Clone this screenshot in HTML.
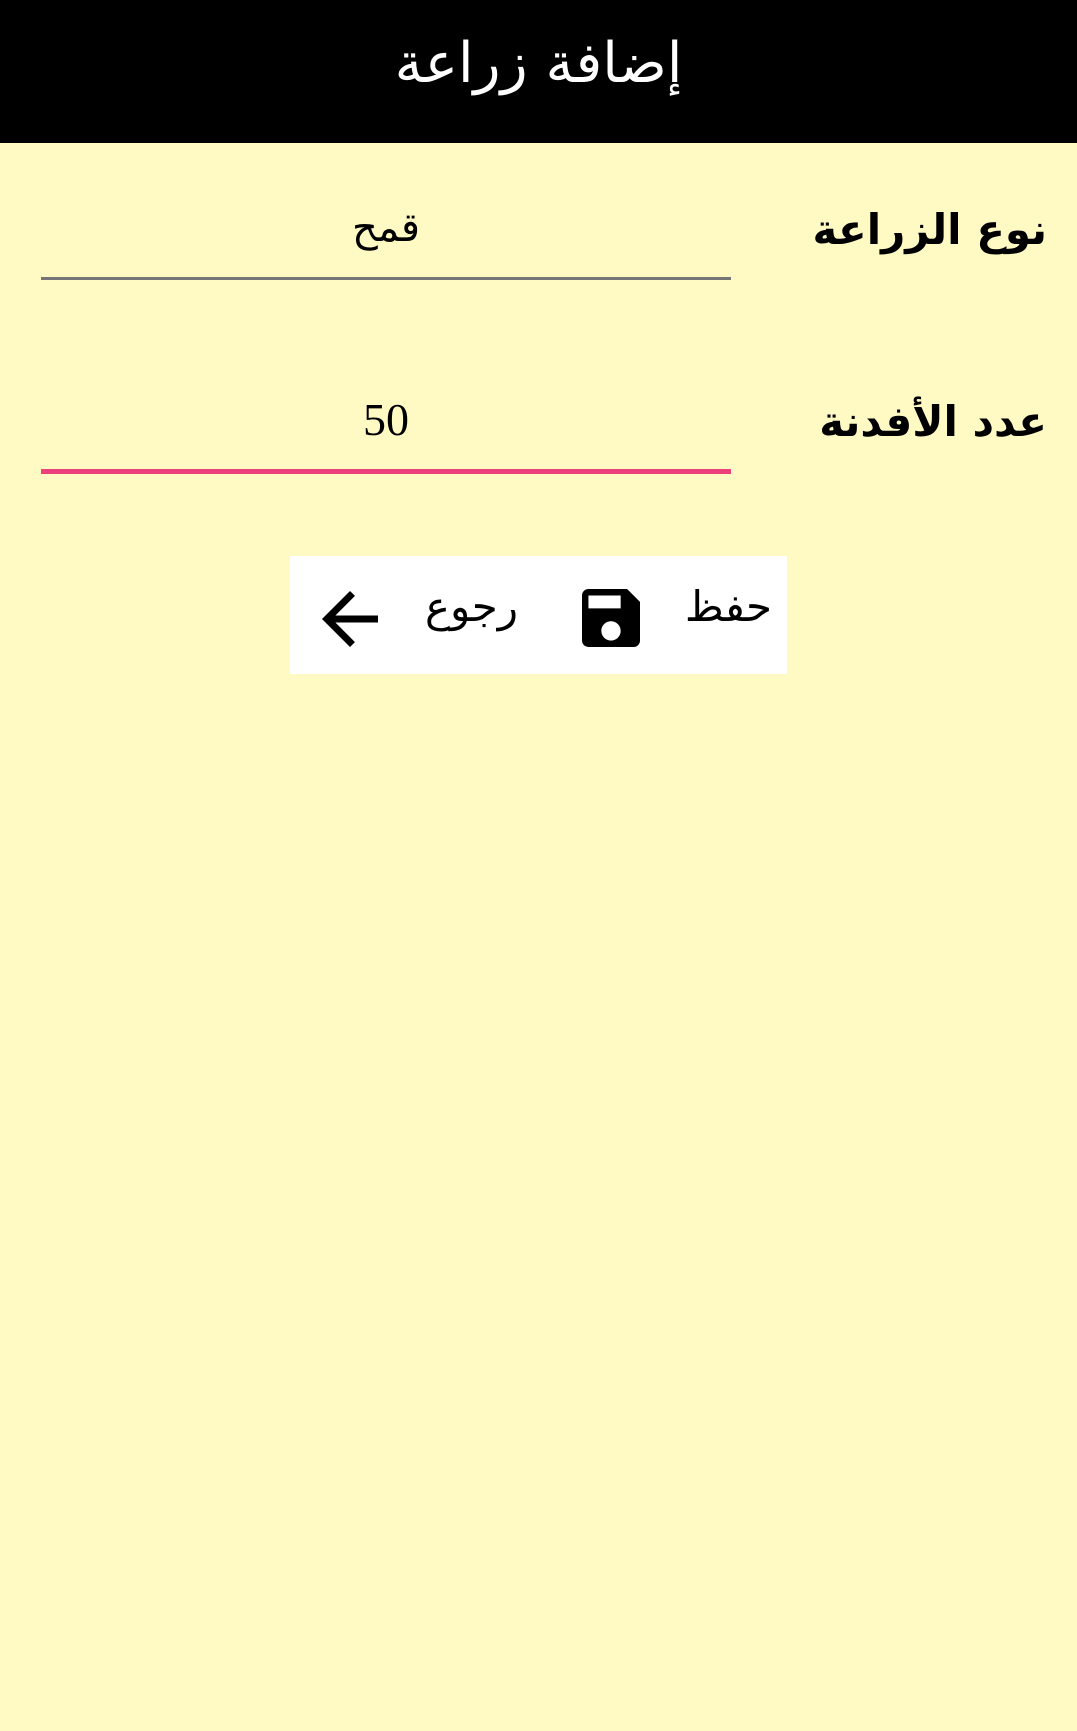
<!DOCTYPE html>
<html><head><meta charset="utf-8"><style>
html,body{margin:0;padding:0;width:1077px;height:1731px;background:#fff9c4;overflow:hidden;font-family:"DejaVu Sans","Noto Sans CJK SC",sans-serif}
.hdr{position:absolute;left:0;top:0;width:1077px;height:143px;background:#000;color:#fff;font-size:56px;text-align:center;line-height:128px}
.lbl{position:absolute;right:30px;font-size:42px;font-weight:bold;color:#000;direction:rtl}
.val{position:absolute;left:41px;width:690px;text-align:center;font-size:40px;color:#000}
.line{position:absolute;left:41px;width:690px}
.btn{position:absolute;left:290px;top:556px;width:497px;height:118px;background:#fff}
.t{position:absolute;font-size:42px;top:26px;direction:rtl}
</style></head><body>
<div class="hdr">إضافة زراعة</div>
<div class="lbl" style="top:205px">نوع الزراعة</div>
<div class="val" style="top:205px;direction:rtl">قمح</div>
<div class="line" style="top:277px;height:3px;background:#757575"></div>
<div class="lbl" style="top:397px">عدد الأفدنة</div>
<div class="val" style="top:393px;font-family:'Liberation Serif',serif;font-size:46px">50</div>
<div class="line" style="top:469px;height:5px;background:#ec407a"></div>
<div class="btn">
<div class="t" style="right:15px">حفظ</div>
<svg style="position:absolute;left:292px;top:33px" width="58" height="58" viewBox="3 3 18 18"><path d="M17 3H5c-1.11 0-2 .9-2 2v14c0 1.1.89 2 2 2h14c1.1 0 2-.9 2-2V7l-4-4zm-5 16c-1.66 0-3-1.34-3-3s1.34-3 3-3 3 1.34 3 3-1.34 3-3 3zm3-10H5V5h10v4z"/></svg>
<div class="t" style="left:135px">رجوع</div>
<svg style="position:absolute;left:32px;top:35px" width="56" height="56" viewBox="4 4 16 16"><path d="M20 11H7.83l5.59-5.59L12 4l-8 8 8 8 1.41-1.41L7.83 13H20v-2z"/></svg>
</div>
</body></html>
